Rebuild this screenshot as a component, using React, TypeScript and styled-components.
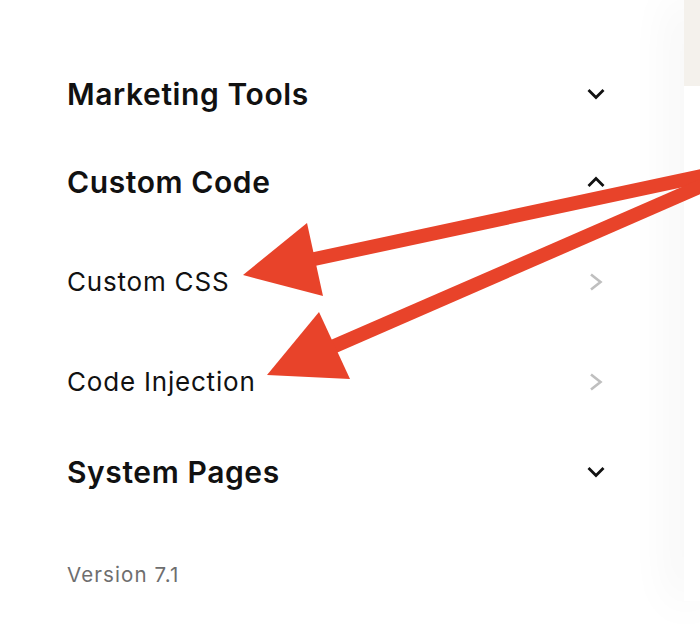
import styled, { createGlobalStyle } from "styled-components"

const GlobalStyle = createGlobalStyle`
  html, body {
    margin: 0;
    padding: 0;
    background: #ffffff;
  }
  body {
    font-family: Inter, "Liberation Sans", sans-serif;
    color: #111111;
    overflow: hidden;
  }
`

const Page = styled.div`
  position: relative;
  display: flex;
  width: 700px;
  height: 634px;
  overflow: hidden;
  background: #ffffff;
`

const Sidebar = styled.nav`
  width: 539px;
  padding: 50px 78px 0 67px;
  display: flex;
  flex-direction: column;
  flex-shrink: 0;
`

const PreviewPane = styled.div`
  flex: 1;
  height: 601px;
  display: flex;
  flex-direction: column;
  box-shadow: -6px 0 48px rgba(0, 0, 0, 0.09);
  background: #ffffff;
`

const PreviewHeader = styled.div`
  height: 86px;
  background: #f4f1ec;
`

const SectionRow = styled.div`
  height: 88px;
  display: flex;
  align-items: center;
  justify-content: space-between;
`

const SectionTitle = styled.span`
  font-size: 30px;
  font-weight: 600;
  letter-spacing: 0.6px;
  line-height: 36px;
`

const SubList = styled.div`
  display: flex;
  flex-direction: column;
  gap: 10px;
  padding: 11px 0 1px;
`

const SubRow = styled.div`
  height: 90px;
  display: flex;
  align-items: center;
  justify-content: space-between;
`

const SubTitle = styled.span`
  font-size: 26px;
  font-weight: 400;
  letter-spacing: 0.8px;
  line-height: 30px;
`

const IconSlot = styled.span`
  width: 20px;
  display: flex;
  align-items: center;
  justify-content: center;
`

const Version = styled.div`
  margin-top: 47px;
  font-size: 20.5px;
  line-height: 24px;
  color: #6e6e6e;
  letter-spacing: 1.1px;
`

const Overlay = styled.svg`
  position: absolute;
  inset: 0;
  pointer-events: none;
`

function Chevron({ dir }: { dir: "down" | "up" | "right" }) {
  if (dir === "right") {
    return (
      <svg width="16" height="20" viewBox="0 0 16 20">
        <polyline points="3,2.5 12.5,10 3,17.5" fill="none" stroke="#bfbfbf" strokeWidth="2.6" />
      </svg>
    )
  }
  const pts = dir === "down" ? "2.5,3 10,10.5 17.5,3" : "2.5,11 10,3.5 17.5,11"
  return (
    <svg width="20" height="14" viewBox="0 0 20 14">
      <polyline points={pts} fill="none" stroke="#111111" strokeWidth="2.8" />
    </svg>
  )
}

function Section({ title, open }: { title: string; open?: boolean }) {
  return (
    <SectionRow>
      <SectionTitle>{title}</SectionTitle>
      <IconSlot>
        <Chevron dir={open ? "up" : "down"} />
      </IconSlot>
    </SectionRow>
  )
}

function SubItem({ title }: { title: string }) {
  return (
    <SubRow>
      <SubTitle>{title}</SubTitle>
      <IconSlot>
        <Chevron dir="right" />
      </IconSlot>
    </SubRow>
  )
}

// annotation arrows drawn over the menu
function Arrows() {
  const red = "#e8432a"
  return (
    <Overlay width="700" height="634" viewBox="0 0 700 634">
      <line x1="720" y1="172" x2="305" y2="261" stroke={red} strokeWidth="14" />
      <polygon points="243,275 307,223 323,296" fill={red} />
      <line x1="720" y1="178" x2="330" y2="348" stroke={red} strokeWidth="14" />
      <polygon points="267,375 319,312 350,379" fill={red} />
    </Overlay>
  )
}

export default function App() {
  return (
    <>
      <GlobalStyle />
      <Page>
        <Sidebar>
          <Section title="Marketing Tools" />
          <Section title="Custom Code" open />
          <SubList>
            <SubItem title="Custom CSS" />
            <SubItem title="Code Injection" />
          </SubList>
          <Section title="System Pages" />
          <Version>Version 7.1</Version>
        </Sidebar>
        <PreviewPane>
          <PreviewHeader />
        </PreviewPane>
        <Arrows />
      </Page>
    </>
  )
}
